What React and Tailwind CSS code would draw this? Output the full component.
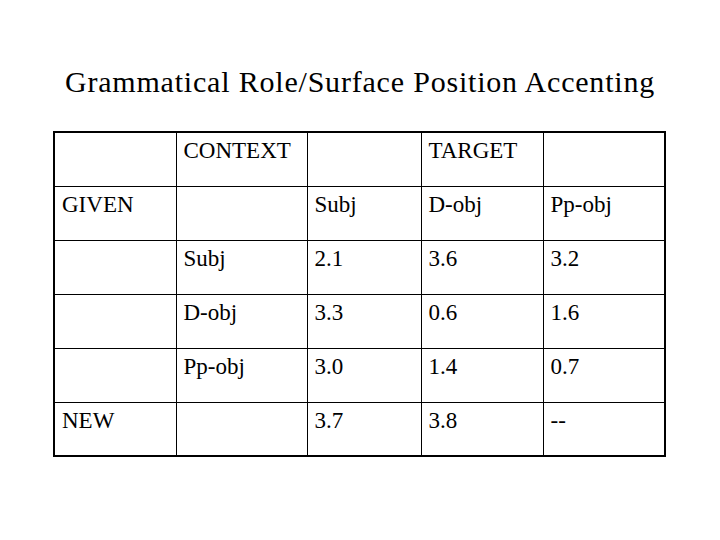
import React from 'react';

const COLS = ['w-[122px]', 'w-[131px]', 'w-[114px]', 'w-[122px]', 'w-[122px]'];

const ROWS = [
  ['', 'CONTEXT', '', 'TARGET', ''],
  ['GIVEN', '', 'Subj', 'D-obj', 'Pp-obj'],
  ['', 'Subj', '2.1', '3.6', '3.2'],
  ['', 'D-obj', '3.3', '0.6', '1.6'],
  ['', 'Pp-obj', '3.0', '1.4', '0.7'],
  ['NEW', '', '3.7', '3.8', '--'],
];

export default function App() {
  return (
    <div className="w-[720px] h-[540px] bg-white text-black flex flex-col items-center font-['Liberation_Serif','Times_New_Roman','DejaVu_Serif',serif]">
      <h1 className="pt-[65px] text-[30px] leading-[34px] tracking-[0.8px] font-normal">
        Grammatical Role/Surface Position Accenting
      </h1>

      <table className="mt-[32px] ml-[-1px] w-[611px] table-fixed border-collapse border-2 border-black">
        <colgroup>
          {COLS.map((c, i) => (
            <col key={i} className={c} />
          ))}
        </colgroup>
        <tbody>
          {ROWS.map((row, r) => (
            <tr key={r} className="h-[54px]">
              {row.map((cell, c) => (
                <td
                  key={c}
                  className="border border-black align-top pt-[5px] pl-[7px] text-[23px] leading-[26px]"
                >
                  {cell}
                </td>
              ))}
            </tr>
          ))}
        </tbody>
      </table>
    </div>
  );
}
